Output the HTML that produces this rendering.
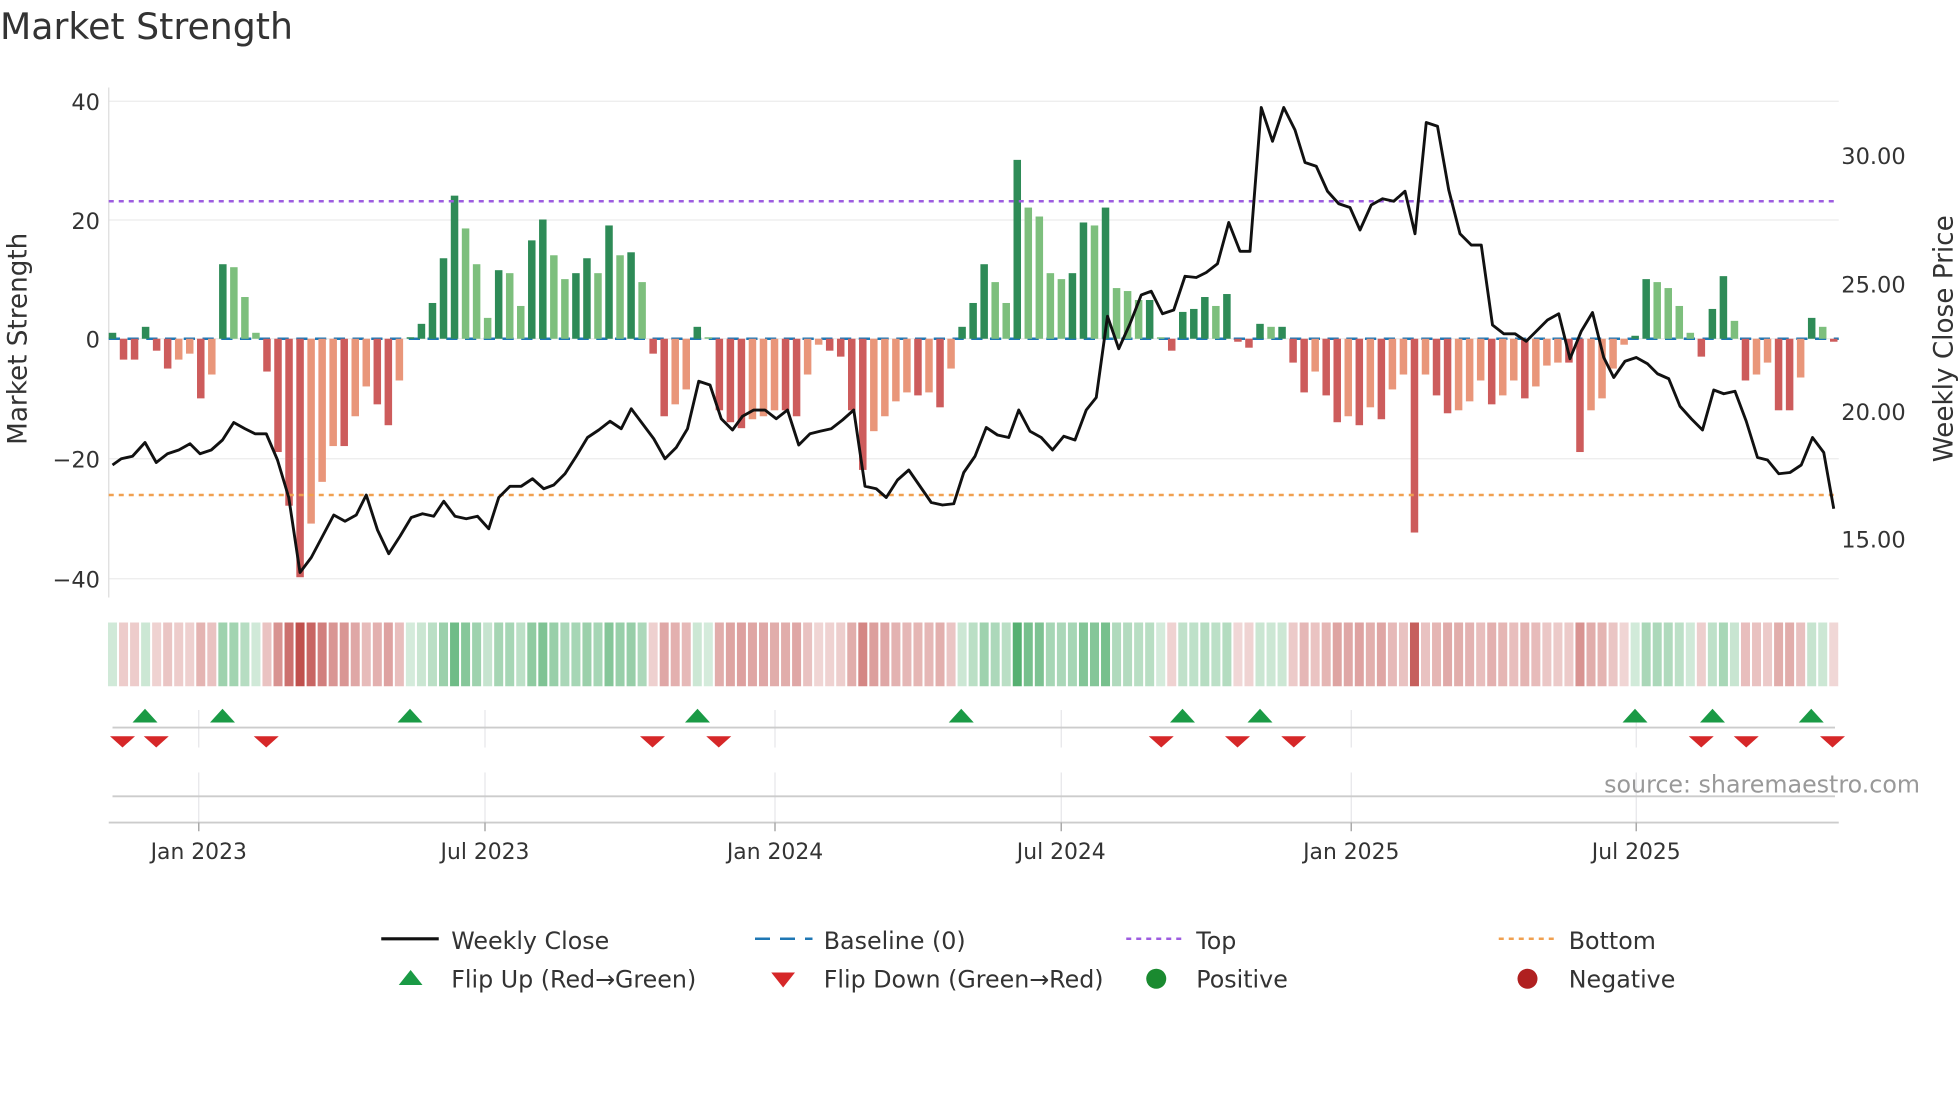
<!DOCTYPE html>
<html><head><meta charset="utf-8"><style>
html,body{margin:0;padding:0;background:#fff;}
svg{display:block;font-family:"DejaVu Sans","Liberation Sans",sans-serif;}
</style></head><body>
<svg id="s" width="1960" height="1102" viewBox="0 0 1568 881.6" xmlns="http://www.w3.org/2000/svg">
<rect width="1568" height="882" fill="#fff"/>
<text x="0" y="31" font-size="29" fill="#333">Market Strength</text>
<g id="grid" stroke="#ececec" stroke-width="1">
<line x1="87" x2="1471" y1="81" y2="81"/><line x1="87" x2="1471" y1="176" y2="176"/><line x1="87" x2="1471" y1="271" y2="271"/><line x1="87" x2="1471" y1="367" y2="367"/><line x1="87" x2="1471" y1="463" y2="463"/>
</g>
<line x1="87" x2="87" y1="70" y2="478" stroke="#ddd"/>
<g font-size="18" fill="#333" text-anchor="end">
<text x="80" y="88">40</text><text x="80" y="183">20</text><text x="80" y="278">0</text><text x="80" y="374">−20</text><text x="80" y="470">−40</text>
</g>
<g font-size="18" fill="#333">
<text x="1473" y="131">30.00</text><text x="1473" y="234">25.00</text><text x="1473" y="336">20.00</text><text x="1473" y="438">15.00</text>
</g>
<text transform="translate(21,271) rotate(-90)" font-size="21" fill="#333" text-anchor="middle">Market Strength</text>
<text transform="translate(1562,271) rotate(-90)" font-size="21" fill="#333" text-anchor="middle">Weekly Close Price</text>
<line x1="87" x2="1471" y1="271" y2="271" stroke="#1f77b4" stroke-width="2" stroke-dasharray="9,6"/>
<g id="bars"></g>
<line x1="87" x2="1471" y1="161" y2="161" stroke="#9d5ce0" stroke-width="2" stroke-dasharray="4,4"/>
<line x1="87" x2="1471" y1="396" y2="396" stroke="#f0a050" stroke-width="2" stroke-dasharray="4,4"/>
<polyline id="price" fill="none" stroke="#111" stroke-width="2.3" stroke-linejoin="round"/>
<g id="heat"></g>
<g stroke="#e6e6ea" stroke-width="1">
<line x1="159" x2="159" y1="568" y2="598"/><line x1="388" x2="388" y1="568" y2="598"/><line x1="620" x2="620" y1="568" y2="598"/><line x1="849" x2="849" y1="568" y2="598"/><line x1="1081" x2="1081" y1="568" y2="598"/><line x1="1309" x2="1309" y1="568" y2="598"/>
<line x1="159" x2="159" y1="618" y2="658"/><line x1="388" x2="388" y1="618" y2="658"/><line x1="620" x2="620" y1="618" y2="658"/><line x1="849" x2="849" y1="618" y2="658"/><line x1="1081" x2="1081" y1="618" y2="658"/><line x1="1309" x2="1309" y1="618" y2="658"/>
</g>
<line x1="90" x2="1468" y1="582" y2="582" stroke="#ccc" stroke-width="1.5"/>
<line x1="90" x2="1468" y1="637" y2="637" stroke="#ccc" stroke-width="1.5"/>
<line x1="87" x2="1471" y1="658" y2="658" stroke="#ccc" stroke-width="1.5"/>
<g id="flips"></g>
<g stroke="#aaa" stroke-width="1.2">
<line x1="159" x2="159" y1="658" y2="665"/><line x1="388" x2="388" y1="658" y2="665"/><line x1="620" x2="620" y1="658" y2="665"/><line x1="849" x2="849" y1="658" y2="665"/><line x1="1081" x2="1081" y1="658" y2="665"/><line x1="1309" x2="1309" y1="658" y2="665"/>
</g>
<g font-size="17.5" fill="#333" text-anchor="middle">
<text x="159" y="687">Jan 2023</text><text x="388" y="687">Jul 2023</text><text x="620" y="687">Jan 2024</text><text x="849" y="687">Jul 2024</text><text x="1081" y="687">Jan 2025</text><text x="1309" y="687">Jul 2025</text>
</g>
<text x="1536" y="634" font-size="19" fill="#999" text-anchor="end">source: sharemaestro.com</text>
<g font-size="19" fill="#333">
<line x1="305" x2="351" y1="751" y2="751" stroke="#111" stroke-width="2.5"/><text x="361" y="759">Weekly Close</text>
<line x1="604" x2="650" y1="751" y2="751" stroke="#1f77b4" stroke-width="2" stroke-dasharray="12,8"/><text x="659" y="759">Baseline (0)</text>
<line x1="901" x2="947" y1="751" y2="751" stroke="#9d5ce0" stroke-width="2" stroke-dasharray="4,4"/><text x="957" y="759">Top</text>
<line x1="1199" x2="1245" y1="751" y2="751" stroke="#f0a050" stroke-width="2" stroke-dasharray="4,4"/><text x="1255" y="759">Bottom</text>
<polygon points="319,788 338,788 328.5,776" fill="#1a9a45"/><text x="361" y="790">Flip Up (Red→Green)</text>
<polygon points="617,778 636,778 626.5,790" fill="#d62728"/><text x="659" y="790">Flip Down (Green→Red)</text>
<circle cx="925" cy="783" r="8" fill="#1a8a30"/><text x="957" y="790">Positive</text>
<circle cx="1222" cy="783" r="8" fill="#b02020"/><text x="1255" y="790">Negative</text>
</g>
</svg>
<script>
var v=[1,-3.5,-3.5,2,-2,-5,-3.5,-2.5,-10,-6,12.5,12,7,1,-5.5,-19,-28,-40,-31,-24,-18,-18,-13,-8,-11,-14.5,-7,0,2.5,6,13.5,24,18.5,12.5,3.5,11.5,11,5.5,16.5,20,14,10,11,13.5,11,19,14,14.5,9.5,-2.5,-13,-11,-8.5,2,0,-12,-14,-15,-13.5,-13,-12,-12,-13,-6,-1,-2,-3,-12,-22,-15.5,-13,-10.5,-9,-9.5,-9,-11.5,-5,2,6,12.5,9.5,6,30,22,20.5,11,10,11,19.5,19,22,8.5,8,6.5,6.5,0,-2,4.5,5,7,5.5,7.5,-0.5,-1.5,2.5,2,2,-4,-9,-5.5,-9.5,-14,-13,-14.5,-11.5,-13.5,-8.5,-6,-32.5,-6,-9.5,-12.5,-12,-10.5,-7,-11,-9.5,-7,-10,-8,-4.5,-4,-4,-19,-12,-10,-5,-1,0.5,10,9.5,8.5,5.5,1,-3,5,10.5,3,-7,-6,-4,-12,-12,-6.5,3.5,2,-0.5];
var n=v.length,x0=90,x1=1467,dx=(x1-x0)/(n-1),NS="http://www.w3.org/2000/svg";
function el(t,a,p){var e=document.createElementNS(NS,t);for(var k in a)e.setAttribute(k,a[k]);p.appendChild(e);return e;}
var B=document.getElementById('bars'),H=document.getElementById('heat');
for(var i=0;i<n;i++){var x=x0+i*dx,val=v[i],p=i?v[i-1]:0,c;
 if(val>=0)c=(val>=p)?'#2e8b57':'#7dbf7d';else c=(val<=p)?'#cd5c5c':'#e9967a';
 var h=Math.abs(val)*4.77;if(h<1.2)h=1.2;
 el('rect',{x:x-3,y:val>=0?271-h:271,width:6,height:h,fill:c},B);
 var a=Math.min(1,0.22+Math.abs(val)/40*0.85);
 el('rect',{x:x-3.6,y:498,width:7.2,height:51,fill:val>=0?'#3aa35a':'#c0504d','fill-opacity':a.toFixed(2)},H);
}
var pts=[90,372,97,367,106,365,116,354,125,370,134,363,143,360,152,355,160,363,169,360,178,352,187,338,196,343,204,347,213,347,222,368,231,398,240,458,249,446,258,429,267,412,276,417,285,412,293,396,302,424,311,443,320,429,329,414,338,411,347,413,355,401,364,413,373,415,382,413,391,423,399,398,408,389,417,389,426,383,435,391,443,388,452,379,461,365,470,350,479,344,488,337,497,343,505,327,514,339,523,351,532,367,541,358,550,343,559,305,568,308,577,335,586,344,594,333,603,328,612,328,621,335,630,328,639,356,648,347,656,345,665,343,674,336,683,328,692,389,701,391,709,398,718,384,727,376,736,389,745,402,754,404,763,403,771,378,780,365,789,342,798,348,807,350,815,328,824,345,833,350,842,360,851,349,860,352,869,328,877,318,886,253,895,279,904,259,913,236,921,233,930,251,939,248,948,221,957,222,965,218,974,211,983,178,992,201,1000,201,1009,86,1018,113,1027,86,1036,104,1044,130,1053,133,1062,153,1071,163,1080,166,1088,184,1097,164,1106,159,1115,161,1124,153,1132,187,1141,98,1150,101,1159,152,1168,187,1177,196,1185,196,1194,260,1203,267,1212,267,1221,273,1230,264,1238,256,1247,251,1256,287,1265,265,1274,250,1283,286,1291,302,1300,289,1309,286,1318,291,1326,299,1335,303,1344,325,1353,335,1362,344,1371,312,1379,315,1388,313,1397,337,1406,366,1414,368,1423,379,1432,378,1441,372,1450,350,1459,362,1467,407];
var s='';for(var i=0;i<pts.length;i+=2)s+=pts[i]+','+pts[i+1]+' ';
document.getElementById('price').setAttribute('points',s);
var F=document.getElementById('flips');
[116,178,328,558,769,946,1008,1308,1370,1449].forEach(function(x){el('polygon',{points:(x-10)+',578 '+(x+10)+',578 '+x+',567',fill:'#1a9a45'},F);});
[98,125,213,522,575,929,990,1035,1361,1397,1466].forEach(function(x){el('polygon',{points:(x-10)+',589 '+(x+10)+',589 '+x+',598',fill:'#d62728'},F);});
</script>
</body></html>
